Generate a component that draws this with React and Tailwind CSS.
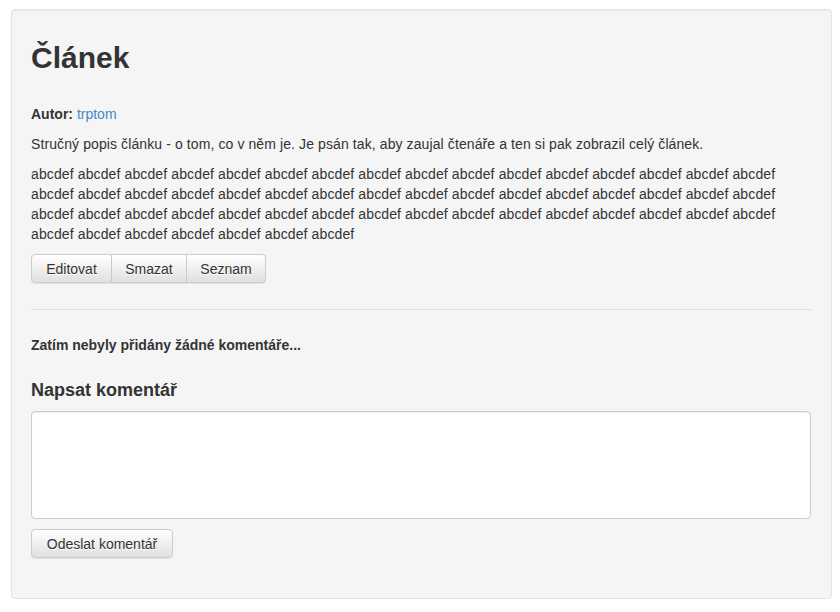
import React from 'react'

// ─── Shared styles ────────────────────────────────────────────────────────────

const BTN =
  'h-[29px] flex items-center justify-center text-[14px] text-[#333] border border-[#ccc] ' +
  'bg-gradient-to-b from-white to-[#e0e0e0] [text-shadow:0_1px_0_#fff] ' +
  'shadow-[inset_0_1px_0_rgba(255,255,255,0.15),0_1px_1px_rgba(0,0,0,0.075)]'

const WORD = 'abcdef'
const line = (n) => Array(n).fill(WORD).join(' ')

// ─── App ──────────────────────────────────────────────────────────────────────

export default function App() {
  return (
    <div
      className="w-[840px] h-[612px] bg-white pt-[9px] pl-[11px] text-[#333] text-[14px] leading-[20px]"
      style={{ fontFamily: '"Liberation Sans", Arial, sans-serif' }}
    >
      <div className="w-[821px] h-[590px] bg-[#f5f5f5] border border-[#e3e3e3] rounded-[4px] shadow-[inset_0_1px_1px_rgba(0,0,0,0.05)] px-[19px] pt-[19px]">
        {/* Article */}
        <h2 className="mt-[12px] mb-[30px] text-[30px] leading-[33px] font-bold">Článek</h2>

        <p className="mb-[10px]">
          <strong>Autor:</strong> <a className="text-[#428bca]">trptom</a>
        </p>

        <p className="mb-[10px] tracking-[0.1px]">
          Stručný popis článku - o tom, co v něm je. Je psán tak, aby zaujal čtenáře a ten si pak zobrazil celý článek.
        </p>

        <p className="mb-[10px] tracking-[0.12px]">
          {line(16)}
          <br />
          {line(16)}
          <br />
          {line(16)}
          <br />
          {line(7)}
        </p>

        {/* Button group */}
        <div className="flex">
          <button className={`${BTN} w-[81px] rounded-l-[4px]`}>Editovat</button>
          <button className={`${BTN} w-[75px] border-l-0`}>Smazat</button>
          <button className={`${BTN} w-[79px] border-l-0 rounded-r-[4px]`}>Seznam</button>
        </div>

        <hr className="mt-[26px] border-0 border-t border-[#e0e0e0]" />

        {/* Comments */}
        <p className="mt-[25px] font-bold">Zatím nebyly přidány žádné komentáře...</p>

        <h4 className="mt-[25px] text-[18px] leading-[20px] font-bold">Napsat komentář</h4>

        <textarea className="mt-[11px] block w-[780px] h-[108px] bg-white border border-[#ccc] rounded-[4px] shadow-[inset_0_1px_1px_rgba(0,0,0,0.075)] resize-none outline-none" />

        <button className={`${BTN} mt-[10px] w-[142px] rounded-[4px]`}>Odeslat komentář</button>
      </div>
    </div>
  )
}
